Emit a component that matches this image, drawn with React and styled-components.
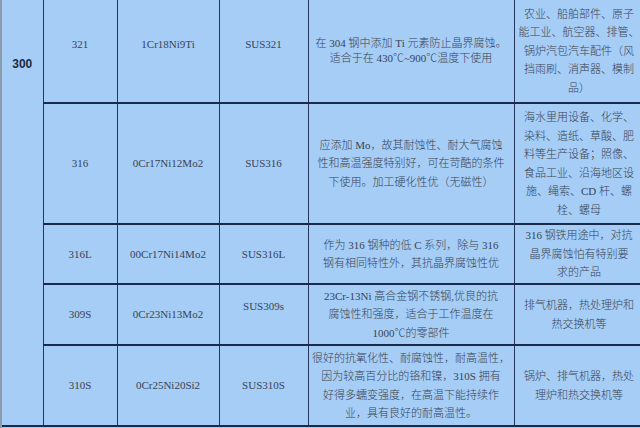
import React from "react";
import styled, { createGlobalStyle } from "styled-components";

const GlobalStyle = createGlobalStyle`
  html, body {
    margin: 0;
    padding: 0;
    background: #a5cdf6;
    overflow: hidden;
  }
`;

const Page = styled.div`
  width: 644px;
  height: 428px;
  border-left: 2px solid #8d9cad;
  background: #a5cdf6;
  overflow: hidden;
`;

const Table = styled.table`
  width: 642px;
  table-layout: fixed;
  border-collapse: collapse;
  font-family: "Liberation Serif", "Noto Sans CJK SC", serif;
  font-size: 11px;
  font-weight: 300;
  color: #3a4354;
`;

const Col = styled.col`
  width: ${(p) => p.$w}px;
`;

const Row = styled.tr`
  height: ${(p) => p.$h}px;
`;

const Cell = styled.td`
  padding: 0 0 ${(p) => p.$lift || 0}px 0;
  text-align: center;
  vertical-align: middle;
  border-right: 1px solid #24365a;
  border-bottom: 2px solid #1a2a4a;
  line-height: ${(p) => p.$lh || 18.5}px;
`;

const GroupCell = styled.td`
  padding: 57px 0 0 0;
  vertical-align: top;
  text-align: center;
  border-right: 1px solid #24365a;
  border-bottom: 2px solid #1a2a4a;
  font-family: "Liberation Sans", Arial, sans-serif;
  font-weight: bold;
  font-size: 12px;
  color: #222b3c;
`;

const Line = styled.span`
  display: block;
  white-space: nowrap;
`;

const widths = [41, 74, 102, 89, 206, 130];

const rows = [
  {
    h: 103,
    lift: 14,
    grade: "321",
    cn: "1Cr18Ni9Ti",
    jis: "SUS321",
    descLh: 15,
    desc: ["在 304 钢中添加 Ti 元素防止晶界腐蚀。", "适合于在 430℃~900℃温度下使用"],
    use: [
      "农业、船舶部件、原子",
      "能工业、航空器、排管、",
      "锅炉汽包汽车配件（风",
      "挡雨刷、消声器、模制",
      "品）",
    ],
  },
  {
    h: 121,
    grade: "316",
    cn: "0Cr17Ni12Mo2",
    jis: "SUS316",
    desc: [
      "应添加 Mo，故其耐蚀性、耐大气腐蚀",
      "性和高温强度特别好，可在苛酷的条件",
      "下使用。加工硬化性优（无磁性）",
    ],
    use: [
      "海水里用设备、化学、",
      "染料、造纸、草酸、肥",
      "料等生产设备；照像、",
      "食品工业、沿海地区设",
      "施、绳索、CD 杆、螺",
      "栓、螺母",
    ],
  },
  {
    h: 60,
    grade: "316L",
    cn: "00Cr17Ni14Mo2",
    jis: "SUS316L",
    desc: ["作为 316 钢种的低 C 系列，除与 316", "钢有相同特性外，其抗晶界腐蚀性优"],
    use: ["316 钢铁用途中，对抗", "晶界腐蚀怕有特别要", "求的产品"],
  },
  {
    h: 61,
    grade: "309S",
    cn: "0Cr23Ni13Mo2",
    jis: "SUS309s",
    jisLift: 17,
    desc: [
      "23Cr-13Ni 高合金钢不锈钢,优良的抗",
      "腐蚀性和强度，适合于工作温度在",
      "1000℃的零部件",
    ],
    use: ["排气机器，热处理炉和", "热交换机等"],
  },
  {
    h: 81,
    grade: "310S",
    cn: "0Cr25Ni20Si2",
    jis: "SUS310S",
    desc: [
      "很好的抗氧化性、耐腐蚀性，耐高温性，",
      "因为较高百分比的铬和镍，310S 拥有",
      "好得多蠕变强度，在高温下能持续作",
      "业，具有良好的耐高温性。",
    ],
    use: ["锅炉、排气机器，热处", "理炉和热交换机等"],
  },
];

const Lines = ({ items }) => items.map((t, i) => <Line key={i}>{t}</Line>);

export default function App() {
  return (
    <Page>
      <GlobalStyle />
      <Table>
        <colgroup>
          {widths.map((w, i) => (
            <Col key={i} $w={w} />
          ))}
        </colgroup>
        <tbody>
          {rows.map((r, i) => (
            <Row key={r.grade} $h={r.h}>
              {i === 0 && <GroupCell rowSpan={rows.length}>300</GroupCell>}
              <Cell $lift={r.lift}>{r.grade}</Cell>
              <Cell $lift={r.lift}>{r.cn}</Cell>
              <Cell $lift={r.jisLift || r.lift}>{r.jis}</Cell>
              <Cell $lh={r.descLh}>
                <Lines items={r.desc} />
              </Cell>
              <Cell>
                <Lines items={r.use} />
              </Cell>
            </Row>
          ))}
        </tbody>
      </Table>
    </Page>
  );
}
